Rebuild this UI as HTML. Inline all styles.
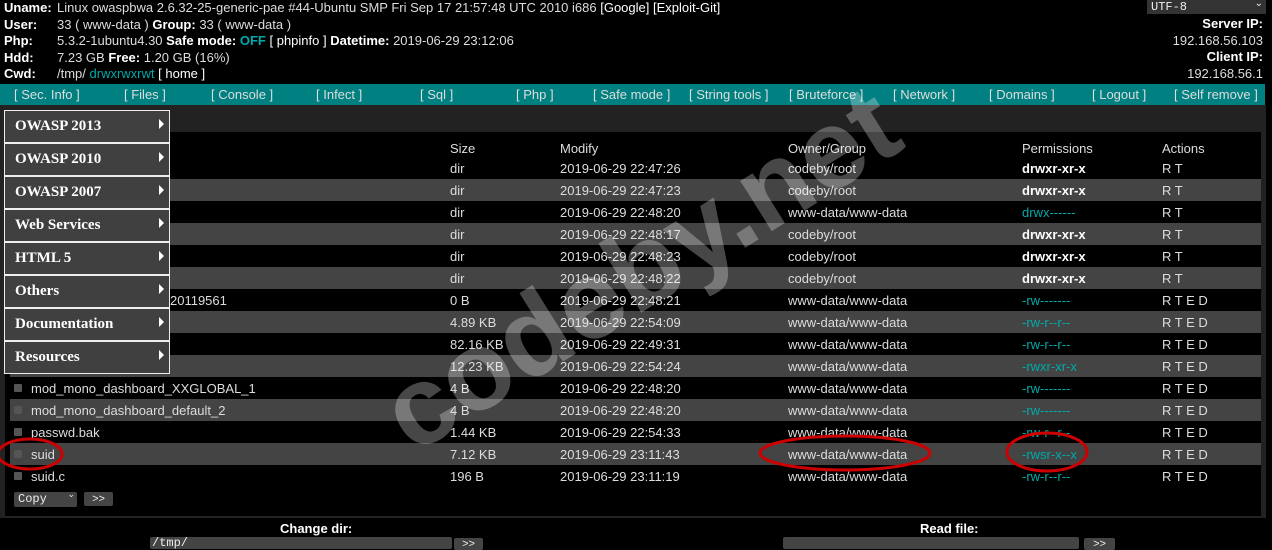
<!DOCTYPE html>
<html><head><meta charset="utf-8"><style>
body{margin:0;width:1272px;height:546px;background:#000;overflow:hidden;position:relative;font-family:"Liberation Sans",sans-serif;font-size:13px;color:#ddd}
.a{position:absolute;white-space:nowrap}
b{color:#fff}
.t{color:#0aa}
#bar{position:absolute;left:0;top:84px;width:1265px;height:21px;background:#008080}
#bar span{position:absolute;top:3px;color:#ddd}
#dark{position:absolute;left:0;top:105px;width:1266px;height:27px;background:#222}
#frame{position:absolute;left:0;top:132px;width:1266px;height:386px;background:#222}
#inner{position:absolute;left:5px;top:132px;width:1256px;height:384px;background:#000}
.row{position:absolute;left:10px;width:1251px;height:22px}
.row span{position:absolute;top:4px}
.g{background:#444}
.cb{position:absolute;left:4px;top:7px;width:8px;height:8px;background:#555;border-radius:1px}
.menu{position:absolute;left:4px;width:164px;height:31px;background:#404040;border:1px solid #eee;font-family:"Liberation Serif",serif;font-weight:bold;font-size:15px;color:#fff}
.menu span{position:absolute;left:10px;top:7px}
.menu i{position:absolute;left:154px;top:8px;width:0;height:0;border-left:5px solid #fff;border-top:5px solid transparent;border-bottom:5px solid transparent}
.in{position:absolute;background:#444;border-radius:2px}
</style></head><body>
<div class="a" style="left:4px;top:0;line-height:16.5px"><b>Uname:</b><br><b>User:</b><br><b>Php:</b><br><b>Hdd:</b><br><b>Cwd:</b></div>
<div class="a" style="left:57px;top:0;line-height:16.5px">Linux owaspbwa 2.6.32-25-generic-pae #44-Ubuntu SMP Fri Sep 17 21:57:48 UTC 2010 i686 <span style="color:#fff">[Google]</span> <span style="color:#fff">[Exploit-Git]</span><br>33 ( www-data ) <b>Group:</b> 33 ( www-data )<br>5.3.2-1ubuntu4.30 <b>Safe mode:</b> <b class="t">OFF</b> <span style="color:#fff">[ phpinfo ]</span> <b>Datetime:</b> 2019-06-29 23:12:06<br>7.23 GB <b>Free:</b> 1.20 GB (16%)<br>/tmp/ <span class="t">drwxrwxrwt</span> <span style="color:#fff">[ home ]</span></div>
<div class="a" style="left:1147px;top:0;width:115px;height:14px;background:#333;color:#eee;font-family:'Liberation Mono',monospace;font-size:12px;padding-left:4px">UTF-8<span style="position:absolute;right:3px;top:-2px;font-size:10px">⌄</span></div>
<div class="a" style="right:9px;top:16px;text-align:right;line-height:16.5px"><b>Server IP:</b><br>192.168.56.103<br><b>Client IP:</b><br>192.168.56.1</div>
<div id="bar"><span style="left:14px">[ Sec. Info ]</span><span style="left:124px">[ Files ]</span><span style="left:211px">[ Console ]</span><span style="left:316px">[ Infect ]</span><span style="left:420px">[ Sql ]</span><span style="left:516px">[ Php ]</span><span style="left:593px">[ Safe mode ]</span><span style="left:689px">[ String tools ]</span><span style="left:789px">[ Bruteforce ]</span><span style="left:893px">[ Network ]</span><span style="left:989px">[ Domains ]</span><span style="left:1092px">[ Logout ]</span><span style="left:1174px">[ Self remove ]</span></div>
<div id="dark"></div><div id="frame"></div><div id="inner"></div>
<div class="row" style="top:137px;color:#ddd"><span style="left:440px">Size</span><span style="left:550px">Modify</span><span style="left:778px">Owner/Group</span><span style="left:1012px">Permissions</span><span style="left:1152px">Actions</span></div>
<div class="row" style="top:157px"><span style="left:440px">dir</span><span style="left:550px">2019-06-29 22:47:26</span><span style="left:778px">codeby/root</span><span style="left:1012px"><b>drwxr-xr-x</b></span><span style="left:1152px">R T</span></div>
<div class="row g" style="top:179px"><span style="left:440px">dir</span><span style="left:550px">2019-06-29 22:47:23</span><span style="left:778px">codeby/root</span><span style="left:1012px"><b>drwxr-xr-x</b></span><span style="left:1152px">R T</span></div>
<div class="row" style="top:201px"><span style="left:440px">dir</span><span style="left:550px">2019-06-29 22:48:20</span><span style="left:778px">www-data/www-data</span><span style="left:1012px" class="t">drwx------</span><span style="left:1152px">R T</span></div>
<div class="row g" style="top:223px"><span style="left:440px">dir</span><span style="left:550px">2019-06-29 22:48:17</span><span style="left:778px">codeby/root</span><span style="left:1012px"><b>drwxr-xr-x</b></span><span style="left:1152px">R T</span></div>
<div class="row" style="top:245px"><span style="left:440px">dir</span><span style="left:550px">2019-06-29 22:48:23</span><span style="left:778px">codeby/root</span><span style="left:1012px"><b>drwxr-xr-x</b></span><span style="left:1152px">R T</span></div>
<div class="row g" style="top:267px"><span style="left:440px">dir</span><span style="left:550px">2019-06-29 22:48:22</span><span style="left:778px">codeby/root</span><span style="left:1012px"><b>drwxr-xr-x</b></span><span style="left:1152px">R T</span></div>
<div class="row" style="top:289px"><span style="left:160px">20119561</span><span style="left:440px">0 B</span><span style="left:550px">2019-06-29 22:48:21</span><span style="left:778px">www-data/www-data</span><span style="left:1012px" class="t">-rw-------</span><span style="left:1152px">R T E D</span></div>
<div class="row g" style="top:311px"><span style="left:440px">4.89 KB</span><span style="left:550px">2019-06-29 22:54:09</span><span style="left:778px">www-data/www-data</span><span style="left:1012px" class="t">-rw-r--r--</span><span style="left:1152px">R T E D</span></div>
<div class="row" style="top:333px"><span style="left:440px">82.16 KB</span><span style="left:550px">2019-06-29 22:49:31</span><span style="left:778px">www-data/www-data</span><span style="left:1012px" class="t">-rw-r--r--</span><span style="left:1152px">R T E D</span></div>
<div class="row g" style="top:355px"><span style="left:440px">12.23 KB</span><span style="left:550px">2019-06-29 22:54:24</span><span style="left:778px">www-data/www-data</span><span style="left:1012px" class="t">-rwxr-xr-x</span><span style="left:1152px">R T E D</span></div>
<div class="row" style="top:377px"><i class="cb"></i><span style="left:21px">mod_mono_dashboard_XXGLOBAL_1</span><span style="left:440px">4 B</span><span style="left:550px">2019-06-29 22:48:20</span><span style="left:778px">www-data/www-data</span><span style="left:1012px" class="t">-rw-------</span><span style="left:1152px">R T E D</span></div>
<div class="row g" style="top:399px"><i class="cb"></i><span style="left:21px">mod_mono_dashboard_default_2</span><span style="left:440px">4 B</span><span style="left:550px">2019-06-29 22:48:20</span><span style="left:778px">www-data/www-data</span><span style="left:1012px" class="t">-rw-------</span><span style="left:1152px">R T E D</span></div>
<div class="row" style="top:421px"><i class="cb"></i><span style="left:21px">passwd.bak</span><span style="left:440px">1.44 KB</span><span style="left:550px">2019-06-29 22:54:33</span><span style="left:778px">www-data/www-data</span><span style="left:1012px" class="t">-rw-r--r--</span><span style="left:1152px">R T E D</span></div>
<div class="row g" style="top:443px"><i class="cb"></i><span style="left:21px">suid</span><span style="left:440px">7.12 KB</span><span style="left:550px">2019-06-29 23:11:43</span><span style="left:778px">www-data/www-data</span><span style="left:1012px" class="t">-rwsr-x--x</span><span style="left:1152px">R T E D</span></div>
<div class="row" style="top:465px"><i class="cb"></i><span style="left:21px">suid.c</span><span style="left:440px">196 B</span><span style="left:550px">2019-06-29 23:11:19</span><span style="left:778px">www-data/www-data</span><span style="left:1012px" class="t">-rw-r--r--</span><span style="left:1152px">R T E D</span></div>
<div class="in" style="left:14px;top:492px;width:63px;height:15px;color:#eee;font-family:'Liberation Mono',monospace;font-size:12px"><span style="position:absolute;left:4px;top:0">Copy</span><span style="position:absolute;right:2px;top:-2px;font-size:9px">⌄</span></div>
<div class="in" style="left:84px;top:492px;width:29px;height:14px;color:#eee;font-size:11px;text-align:center;line-height:14px">&gt;&gt;</div>
<div class="a" style="left:280px;top:521px"><b>Change dir:</b></div>
<div class="in" style="left:150px;top:537px;width:300px;height:12px;color:#eee;font-family:'Liberation Mono',monospace;font-size:12px;padding-left:2px;line-height:12px">/tmp/</div>
<div class="in" style="left:454px;top:538px;width:29px;height:12px;color:#eee;font-size:11px;text-align:center">&gt;&gt;</div>
<div class="a" style="left:920px;top:521px"><b>Read file:</b></div>
<div class="in" style="left:783px;top:537px;width:296px;height:12px"></div>
<div class="in" style="left:1084px;top:538px;width:31px;height:12px;color:#eee;font-size:11px;text-align:center">&gt;&gt;</div>
<div class="a" style="left:640px;top:268px;transform:translate(-50%,-50%) rotate(-32deg);font-size:112px;font-weight:bold;color:rgba(255,255,255,0.28)">codeby.net</div>
<div class="menu" style="top:110px"><span>OWASP 2013</span><i></i></div>
<div class="menu" style="top:143px"><span>OWASP 2010</span><i></i></div>
<div class="menu" style="top:176px"><span>OWASP 2007</span><i></i></div>
<div class="menu" style="top:209px"><span>Web Services</span><i></i></div>
<div class="menu" style="top:242px"><span>HTML 5</span><i></i></div>
<div class="menu" style="top:275px"><span>Others</span><i></i></div>
<div class="menu" style="top:308px"><span>Documentation</span><i></i></div>
<div class="menu" style="top:341px"><span>Resources</span><i></i></div>
<svg class="a" style="left:0;top:0" width="1272" height="546"><g fill="none" stroke="#c00" stroke-width="3"><ellipse cx="30" cy="454" rx="32" ry="15"/><ellipse cx="845" cy="453" rx="85" ry="17"/><ellipse cx="1047" cy="452" rx="40" ry="19"/></g></svg>
</body></html>
